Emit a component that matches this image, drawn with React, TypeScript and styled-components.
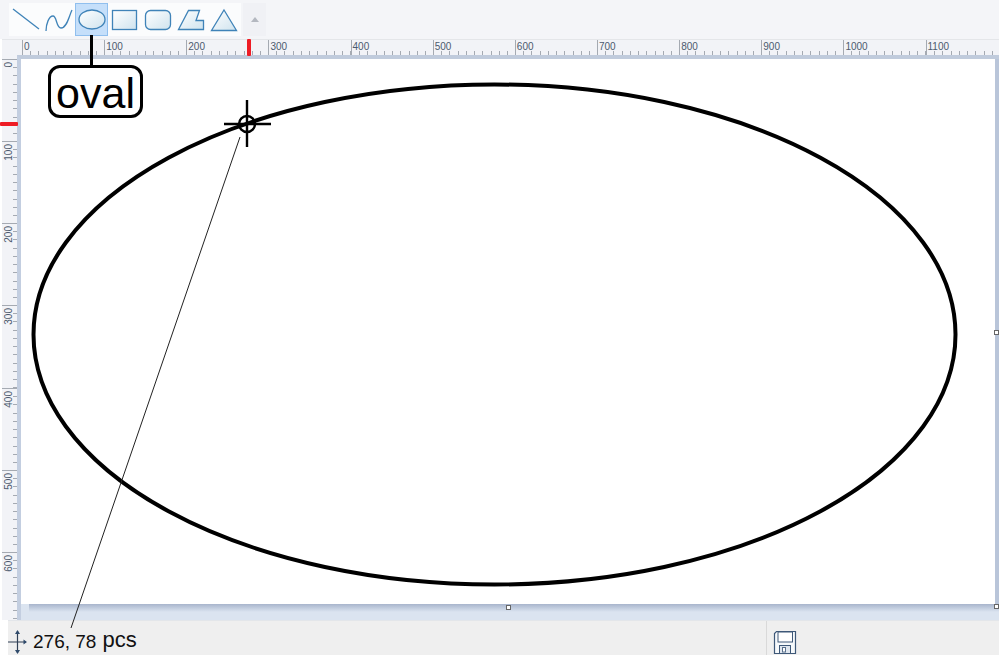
import React from 'react'
import styled, { createGlobalStyle } from 'styled-components'

const GlobalStyle = createGlobalStyle`
  html, body {
    margin: 0;
    padding: 0;
    background: #ffffff;
  }
  body {
    font-family: "Liberation Sans", Arial, sans-serif;
  }
`

const Screen = styled.div`
  position: relative;
  display: flex;
  flex-direction: column;
  width: 999px;
  height: 655px;
  overflow: hidden;
  background: #ffffff;
`

const Toolbar = styled.div`
  display: flex;
  gap: 2px;
  height: 39px;
  padding: 3px 0 0 9px;
  box-sizing: border-box;
  background: #f4f5f8;
`

const Gallery = styled.div`
  display: flex;
  width: 232px;
  height: 33px;
  background: #fbfcfd;
`

const ShapeButton = styled.div<{ $active?: boolean }>`
  display: flex;
  align-items: center;
  justify-content: center;
  flex: 0 0 33px;
  height: 33px;
  box-sizing: border-box;
  background: ${({ $active }) => ($active ? '#c5dffa' : 'transparent')};
  border: 1px solid ${({ $active }) => ($active ? '#90bfee' : 'transparent')};
`

const ScrollButton = styled.div`
  display: flex;
  align-items: center;
  justify-content: center;
  width: 23px;
  height: 33px;
  background: #f0f1f5;
`

const ScrollArrow = styled.div`
  width: 0;
  height: 0;
  border-left: 4px solid transparent;
  border-right: 4px solid transparent;
  border-bottom: 5px solid #b4b8c0;
`

const HRuler = styled.div`
  display: flex;
  height: 16px;
  margin-left: 2px;
  padding-left: 20px;
  box-sizing: border-box;
  overflow: hidden;
  background: #f2f3f7;
  border-top: 1px solid #e4e6e9;
`

const HSegment = styled.div`
  flex: 0 0 82.15px;
  height: 15px;
  box-sizing: border-box;
  padding: 1px 0 0 1px;
  border-left: 1px solid #a5aab2;
  font-size: 10px;
  line-height: 11px;
  color: #4c5a6e;
  background:
    repeating-linear-gradient(to right, transparent 0, transparent 7.215px, #a5aab2 7.215px, #a5aab2 8.215px)
    bottom left / 100% 4px no-repeat;
`

const Middle = styled.div`
  display: flex;
  height: 565px;
`

const VRuler = styled.div`
  display: flex;
  flex-direction: column;
  flex: 0 0 15px;
  height: 565px;
  margin-left: 2px;
  padding-top: 4px;
  box-sizing: border-box;
  overflow: hidden;
  background: #f2f3f7;
`

const VSegment = styled.div`
  flex: 0 0 82.15px;
  box-sizing: border-box;
  padding: 2px 0 0 2px;
  border-top: 1px solid #a5aab2;
  background:
    repeating-linear-gradient(to bottom, transparent 0, transparent 7.215px, #a5aab2 7.215px, #a5aab2 8.215px)
    top right / 4px 100% no-repeat;
`

const VLabel = styled.div`
  writing-mode: vertical-rl;
  transform: rotate(180deg);
  font-size: 10px;
  line-height: 10px;
  color: #4c5a6e;
`

const Workspace = styled.div`
  display: flex;
  flex-direction: column;
  flex: 1;
  background: #dbe4f0;
  border-top: 4px solid #c0cbdc;
  border-left: 4px solid #c3cee0;
`

const PageRow = styled.div`
  display: flex;
  height: 545px;
`

const Page = styled.div`
  flex: 1;
  background: #ffffff;
`

const RightShade = styled.div`
  flex: 0 0 4px;
  background: #b9c5d9;
`

const BottomShade = styled.div`
  height: 8px;
  margin-left: 8px;
  background: linear-gradient(to bottom, #a8b5cc, #dbe4f0);
`

const StatusBar = styled.div`
  display: flex;
  align-items: center;
  height: 35px;
  margin-left: 8px;
  background: #efefef;
  border-top: 1px solid #e3e6ea;
  box-sizing: border-box;
`

const StatusInfo = styled.div`
  display: flex;
  align-items: center;
  flex: 0 0 759px;
  height: 100%;
  padding-top: 7px;
  border-right: 1px solid #d9d9d9;
  box-sizing: border-box;
  color: #111111;
`

const Coords = styled.span`
  margin-left: 6px;
  font-size: 19px;
`

const Unit = styled.span`
  margin-left: 6px;
  margin-top: -3px;
  font-size: 22px;
`

const SaveSlot = styled.div`
  display: flex;
  align-items: flex-end;
  height: 100%;
  padding-left: 6px;
`

const Overlay = styled.svg`
  position: absolute;
  left: 0;
  top: 0;
  pointer-events: none;
`

const Connector = styled.div`
  position: absolute;
  left: 90px;
  top: 35px;
  width: 3px;
  height: 31px;
  background: #000000;
`

const Callout = styled.div`
  position: absolute;
  left: 48px;
  top: 65px;
  width: 95px;
  height: 53px;
  box-sizing: border-box;
  border: 3px solid #000000;
  border-radius: 12px;
  background: #ffffff;
  font-size: 43px;
  line-height: 50px;
  text-align: center;
  color: #000000;
`

const Marker = styled.div<{ $vertical?: boolean }>`
  position: absolute;
  background: #ee1c25;
  border-radius: 1px;
  left: ${({ $vertical }) => ($vertical ? '247px' : '0')};
  top: ${({ $vertical }) => ($vertical ? '39px' : '122px')};
  width: ${({ $vertical }) => ($vertical ? '4px' : '18px')};
  height: ${({ $vertical }) => ($vertical ? '17px' : '4px')};
`

const Handle = styled.div<{ $x: number; $y: number }>`
  position: absolute;
  left: ${({ $x }) => $x}px;
  top: ${({ $y }) => $y}px;
  width: 3px;
  height: 3px;
  background: #ffffff;
  border: 1px solid #666666;
`

const ShapeDefs = () => (
  <svg width="0" height="0" style={{ position: 'absolute' }}>
    <defs>
      <linearGradient id="shapeFill" x1="0" y1="0" x2="1" y2="1">
        <stop offset="0" stopColor="#ffffff" />
        <stop offset="1" stopColor="#cfe3ee" />
      </linearGradient>
    </defs>
  </svg>
)

const stroke = { stroke: '#3f83b8', strokeWidth: 1.3, fill: 'url(#shapeFill)' }

const shapes = [
  { key: 'line', el: <path d="M3 5 L29 25" stroke="#3f83b8" strokeWidth="1.3" fill="none" /> },
  {
    key: 'curve',
    el: <path d="M3 27 C3 20 6 12 10 12 C14 12 13 24 18 24 C24 24 26 12 29 6" stroke="#3f83b8" strokeWidth="1.3" fill="none" />,
  },
  { key: 'oval', el: <ellipse cx="16" cy="15.5" rx="13" ry="9.5" {...stroke} /> },
  { key: 'rect', el: <rect x="3.5" y="6.5" width="24" height="19" {...stroke} /> },
  { key: 'round', el: <rect x="3.5" y="6.5" width="25" height="19" rx="5" {...stroke} /> },
  { key: 'trapezoid', el: <path d="M3.5 25.5 L13.5 6.5 L24.5 6.5 L21 16.5 L28.5 16.5 L28.5 25.5 Z" {...stroke} /> },
  { key: 'triangle', el: <path d="M16 6 L28.5 26.5 L3.5 26.5 Z" {...stroke} /> },
]

const hLabels = Array.from({ length: 12 }, (_, i) => i * 100)
const vLabels = Array.from({ length: 7 }, (_, i) => i * 100)

const MoveIcon = () => (
  <svg width="19" height="24" viewBox="0 0 19 24">
    <path d="M9.5 1 V23 M0 12 H18" stroke="#2f3f55" strokeWidth="1.2" fill="none" />
    <path d="M9.5 0 L12 4 H7 Z M9.5 24 L12 20 H7 Z M19 12 L15.5 9.5 V14.5 Z" fill="#2f4a6b" />
  </svg>
)

const SaveIcon = () => (
  <svg width="24" height="25" viewBox="0 0 24 25">
    <path d="M3.5 1.5 H22.5 V23.5 H1.5 V3.5 Z" fill="#f6f9fb" stroke="#3e5878" strokeWidth="1.2" />
    <rect x="5" y="2" width="14.5" height="10" fill="#ffffff" stroke="#3e5878" strokeWidth="1" />
    <rect x="6.5" y="15.5" width="11" height="8" fill="#dfe6ee" stroke="#3e5878" strokeWidth="1" />
    <rect x="9.5" y="17.5" width="3" height="4.5" fill="#ffffff" stroke="#59708c" strokeWidth="1" />
  </svg>
)

export default function App() {
  return (
    <Screen>
      <GlobalStyle />
      <ShapeDefs />
      <Toolbar>
        <Gallery>
          {shapes.map((s) => (
            <ShapeButton key={s.key} $active={s.key === 'oval'}>
              <svg width="31" height="31" viewBox="0 0 31 31" overflow="visible">
                {s.el}
              </svg>
            </ShapeButton>
          ))}
        </Gallery>
        <ScrollButton>
          <ScrollArrow />
        </ScrollButton>
      </Toolbar>

      <HRuler>
        {hLabels.map((n) => (
          <HSegment key={n}>{n}</HSegment>
        ))}
      </HRuler>

      <Middle>
        <VRuler>
          {vLabels.map((n) => (
            <VSegment key={n}>
              <VLabel>{n}</VLabel>
            </VSegment>
          ))}
        </VRuler>
        <Workspace>
          <PageRow>
            <Page />
            <RightShade />
          </PageRow>
          <BottomShade />
        </Workspace>
      </Middle>

      <StatusBar>
        <StatusInfo>
          <MoveIcon />
          <Coords>276, 78</Coords>
          <Unit>pcs</Unit>
        </StatusInfo>
        <SaveSlot>
          <SaveIcon />
        </SaveSlot>
      </StatusBar>

      <Overlay width="999" height="655" viewBox="0 0 999 655">
        <ellipse cx="494.5" cy="334.5" rx="461" ry="250" fill="none" stroke="#000" strokeWidth="4" />
        <circle cx="247" cy="124" r="8" fill="none" stroke="#000" strokeWidth="2.4" />
        <path d="M224 124 H271 M247 100 V147" stroke="#000" strokeWidth="2.4" fill="none" />
        <path d="M240 137 L71 628" stroke="#222" strokeWidth="1" fill="none" />
      </Overlay>

      <Connector />
      <Callout>oval</Callout>
      <Marker $vertical />
      <Marker />
      <Handle $x={506} $y={605} />
      <Handle $x={994} $y={330} />
      <Handle $x={994} $y={604} />
    </Screen>
  )
}
